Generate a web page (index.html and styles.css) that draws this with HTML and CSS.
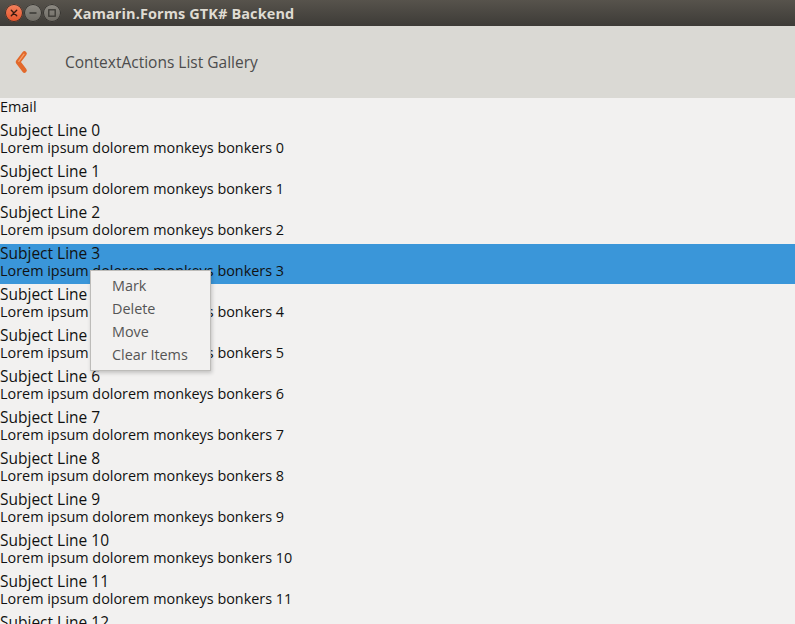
FILE: index.html
```html
<!DOCTYPE html>
<html>
<head>
<meta charset="utf-8">
<link rel="stylesheet" href="styles.css">
</head>
<body>
<div class="window">
  <div class="titlebar">
    <div class="wbtns">
      <span class="wbtn close"><svg width="18" height="18" viewBox="0 0 18 18"><path d="M6.3 6.3 L11.7 11.7 M11.7 6.3 L6.3 11.7" stroke="#3b1a10" stroke-width="1.4" stroke-linecap="round"/></svg></span>
      <span class="wbtn"><svg width="18" height="18" viewBox="0 0 18 18"><path d="M5.5 9 H12.5" stroke="#3a3934" stroke-width="1.5"/></svg></span>
      <span class="wbtn"><svg width="18" height="18" viewBox="0 0 18 18"><rect x="5.8" y="5.8" width="6.4" height="6.4" fill="none" stroke="#3a3934" stroke-width="1.3"/></svg></span>
    </div>
    <div class="wtitle">Xamarin.Forms GTK# Backend</div>
  </div>
  <div class="header">
    <svg class="back" width="16" height="24" viewBox="0 0 16 24"><path d="M11.5 3.5 L5 12 L11.5 20.5" fill="none" stroke="#e2692b" stroke-width="4.6" stroke-linecap="round" stroke-linejoin="round"/><path d="M11 4.2 L5.8 11.4" fill="none" stroke="#f5a06a" stroke-width="1.3" stroke-linecap="round"/></svg>
    <div class="htitle">ContextActions List Gallery</div>
  </div>
  <div class="content">
    <div class="email">Email</div>
    <div class="list">
      <div class="row"><div class="subj">Subject Line 0</div><div class="body">Lorem ipsum dolorem monkeys bonkers 0</div></div>
      <div class="row"><div class="subj">Subject Line 1</div><div class="body">Lorem ipsum dolorem monkeys bonkers 1</div></div>
      <div class="row"><div class="subj">Subject Line 2</div><div class="body">Lorem ipsum dolorem monkeys bonkers 2</div></div>
      <div class="row sel"><div class="subj">Subject Line 3</div><div class="body">Lorem ipsum dolorem monkeys bonkers 3</div></div>
      <div class="row"><div class="subj">Subject Line 4</div><div class="body">Lorem ipsum dolorem monkeys bonkers 4</div></div>
      <div class="row"><div class="subj">Subject Line 5</div><div class="body">Lorem ipsum dolorem monkeys bonkers 5</div></div>
      <div class="row"><div class="subj">Subject Line 6</div><div class="body">Lorem ipsum dolorem monkeys bonkers 6</div></div>
      <div class="row"><div class="subj">Subject Line 7</div><div class="body">Lorem ipsum dolorem monkeys bonkers 7</div></div>
      <div class="row"><div class="subj">Subject Line 8</div><div class="body">Lorem ipsum dolorem monkeys bonkers 8</div></div>
      <div class="row"><div class="subj">Subject Line 9</div><div class="body">Lorem ipsum dolorem monkeys bonkers 9</div></div>
      <div class="row"><div class="subj">Subject Line 10</div><div class="body">Lorem ipsum dolorem monkeys bonkers 10</div></div>
      <div class="row"><div class="subj">Subject Line 11</div><div class="body">Lorem ipsum dolorem monkeys bonkers 11</div></div>
      <div class="row"><div class="subj">Subject Line 12</div><div class="body">Lorem ipsum dolorem monkeys bonkers 12</div></div>
    </div>
    <div class="menu">
      <div class="mi">Mark</div>
      <div class="mi">Delete</div>
      <div class="mi">Move</div>
      <div class="mi">Clear Items</div>
    </div>
  </div>
</div>
</body>
</html>
```
FILE: styles.css
```css
html, body {
  margin: 0;
  padding: 0;
  width: 795px;
  height: 624px;
  overflow: hidden;
  background: #f2f1f0;
  font-family: "Open Sans", "Noto Sans", sans-serif;
}
.window {
  display: flex;
  flex-direction: column;
  height: 624px;
}
.titlebar {
  height: 26px;
  flex: none;
  display: flex;
  align-items: center;
  background: linear-gradient(#57534c, #3d3b37);
}
.wbtns {
  display: flex;
  gap: 1px;
  padding-left: 5px;
  width: 68px;
}
.wbtn {
  width: 18px;
  height: 18px;
  border-radius: 50%;
  background: linear-gradient(#8e8b84, #6d6a63);
  box-shadow: inset 0 0 0 1px #35332f;
  display: flex;
}
.wbtn.close {
  background: linear-gradient(#f5835f, #e4532a);
}
.wtitle {
  color: #dfdbd2;
  font-weight: bold;
  font-size: 14.5px;
  letter-spacing: 0.1px;
}
.header {
  height: 72px;
  flex: none;
  background: #dad9d4;
  display: flex;
  align-items: center;
}
.back {
  margin-left: 13px;
}
.htitle {
  margin-left: 36px;
  font-size: 15.5px;
  color: #4c4c4c;
}
.content {
  position: relative;
  flex: 1;
}
.email {
  height: 23px;
  font-size: 14.4px;
  line-height: 18px;
  color: #111;
}
.list {
  display: flex;
  flex-direction: column;
  gap: 1px;
}
.row {
  height: 40px;
  color: #111;
}
.row.sel {
  background: #3a96d9;
}
.subj {
  font-size: 15.5px;
  line-height: 18px;
}
.body {
  font-size: 14.4px;
  line-height: 18px;
}
.menu {
  position: absolute;
  left: 90px;
  top: 172px;
  width: 119px;
  padding: 3px 0 4px;
  background: #f2f1f0;
  border: 1px solid #bdbcb9;
  box-shadow: 1px 2px 4px rgba(0,0,0,0.2);
}
.mi {
  height: 23px;
  line-height: 23px;
  padding-left: 21px;
  font-size: 14.4px;
  color: #555;
}
```
